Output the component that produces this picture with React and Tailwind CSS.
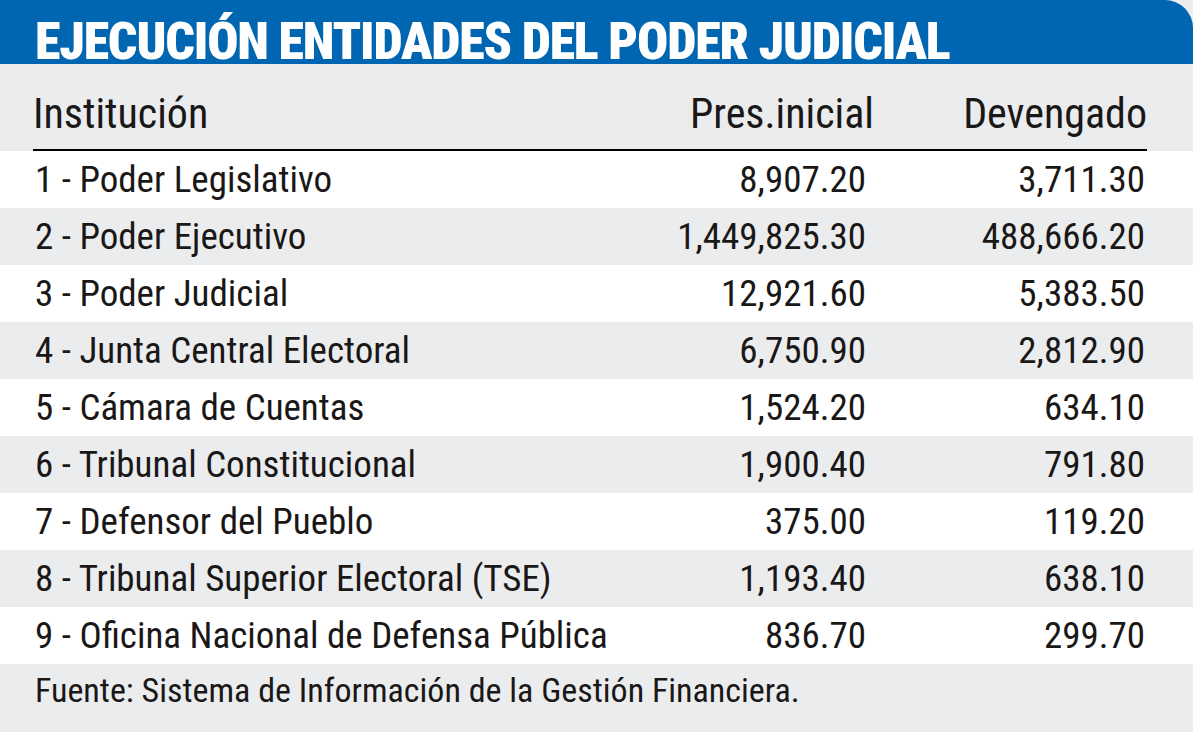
import React from "react";

const rows = [
  ["1 - Poder Legislativo", "8,907.20", "3,711.30"],
  ["2 - Poder Ejecutivo", "1,449,825.30", "488,666.20"],
  ["3 - Poder Judicial", "12,921.60", "5,383.50"],
  ["4 - Junta Central Electoral", "6,750.90", "2,812.90"],
  ["5 - Cámara de Cuentas", "1,524.20", "634.10"],
  ["6 - Tribunal Constitucional", "1,900.40", "791.80"],
  ["7 - Defensor del Pueblo", "375.00", "119.20"],
  ["8 - Tribunal Superior Electoral (TSE)", "1,193.40", "638.10"],
  ["9 - Oficina Nacional de Defensa Pública", "836.70", "299.70"],
];

export default function App() {
  return (
    <div className="w-[1200px] h-[732px] bg-white overflow-hidden">
      <div className="w-[1193px] h-[732px] bg-[#ebecee] text-[#1a1717] font-[430] font-['Roboto_Condensed','DejaVu_Sans_Condensed',sans-serif]">
        {/* title bar */}
        <div className="h-[64px] bg-[#0066b1] rounded-tr-[28px] pl-[35px] pt-[16px]">
          <h1 className="text-white font-black text-[52px] leading-[52px] tracking-[-1.2px] whitespace-nowrap">
            EJECUCIÓN ENTIDADES DEL PODER JUDICIAL
          </h1>
        </div>

        {/* column headings */}
        <div className="pl-[33px] pr-[46px]">
          <div className="grid grid-cols-[minmax(0,1fr)_244px_273px] pt-[26px] pb-[11px] border-b-2 border-black text-[42px] leading-[48px]">
            <div>Institución</div>
            <div className="text-right">Pres.inicial</div>
            <div className="text-right">Devengado</div>
          </div>
        </div>

        {/* data rows */}
        {rows.map(([name, pres, dev], i) => (
          <div key={name} className={i % 2 === 0 ? "bg-white" : "bg-[#ebecee]"}>
            <div className="pl-[35px] pr-[46px] grid grid-cols-[minmax(0,1fr)_242px_273px] h-[57px] text-[37px] leading-[57px] whitespace-nowrap">
              <div>{name}</div>
              <div className="text-right pr-[8px]">{pres}</div>
              <div className="text-right pr-[2px]">{dev}</div>
            </div>
          </div>
        ))}

        {/* source */}
        <div className="pl-[35px] pt-[6px] text-[34px] leading-[40px] whitespace-nowrap">
          Fuente: Sistema de Información de la Gestión Financiera.
        </div>
      </div>
    </div>
  );
}
